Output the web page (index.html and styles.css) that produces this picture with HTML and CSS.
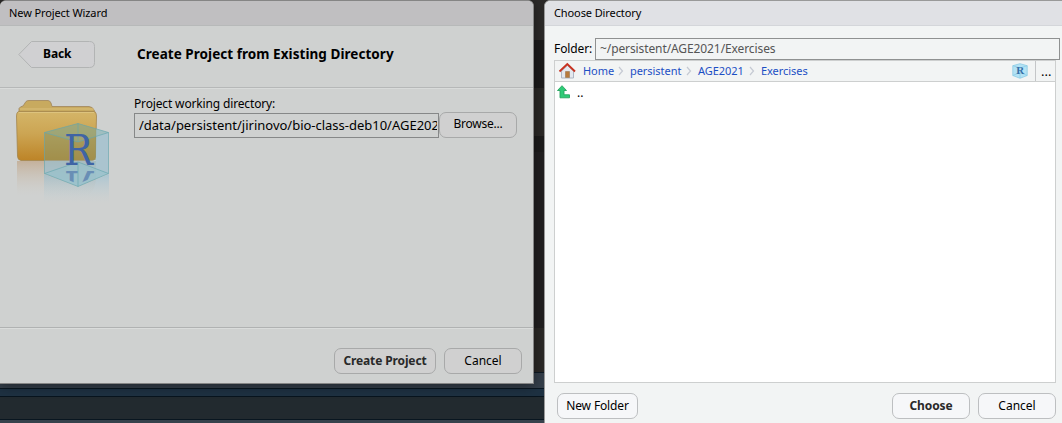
FILE: index.html
```html
<!DOCTYPE html>
<html lang="en">
<head>
<meta charset="utf-8">
<title>New Project Wizard</title>
<link rel="stylesheet" href="styles.css">
</head>
<body>
<section class="dialog wizard">
  <header class="titlebar"><span class="t-new">New Project Wizard</span></header>
  <div class="wizard-head">
    <div class="back">
      <svg width="78" height="28" viewBox="0 0 78 28"><path d="M.8 13.5 13.5.5H71.500Q76.500.5 76.500 5.500V21.500Q76.500 26.500 71.500 26.500H13.500Z" fill="#d0d0d2" stroke="#b2b4b4"/></svg>
      <b class="t-back">Back</b>
    </div>
    <h1><span class="t-heading">Create Project from Existing Directory</span></h1>
  </div>
  <div class="wizard-body">
    <svg class="folder" width="98" height="112" viewBox="14 92 98 112">
      <defs>
        <linearGradient id="gold" x1="0" y1="0" x2="0" y2="1"><stop stop-color="#d4b568"/><stop offset=".45" stop-color="#cca553"/><stop offset="1" stop-color="#bd8427"/></linearGradient>
        <linearGradient id="fade" x1="0" y1="0" x2="0" y2="1"><stop stop-color="#bd9c78" stop-opacity=".6"/><stop offset="1" stop-color="#cdc5bc" stop-opacity="0"/></linearGradient>
        <linearGradient id="bluefade" x1="0" y1="0" x2="0" y2="1"><stop stop-color="#92bdd2" stop-opacity=".6"/><stop offset="1" stop-color="#bbced4" stop-opacity="0"/></linearGradient>
        <clipPath id="mirror"><path d="M44 170H110L78 184Z"/></clipPath>
      </defs>
      <path d="M17 161H96V178Q96 189 88 196H17Z" fill="url(#fade)"/>
      <path d="M44 174 78 187 109 174V203H44Z" fill="url(#bluefade)"/>
      <path d="M19 111V108.500Q20 106.500 23 106L26 101.500Q27 100.500 29 100.500H48Q50 100.500 51 103L52 106.500H89Q93 107 94 110L95 112V120H19Z" fill="#c8aa5f" stroke="#a0845a" stroke-width=".8"/>
      <path d="M18.500 111.500H94Q96.500 112 96.500 116L95.500 157Q95 160.500 92 160.500H21Q17.500 160 17.500 156L16.500 116Q16.500 112 18.500 111.500Z" fill="url(#gold)" stroke="#a3854d" stroke-width=".8"/>
      <path d="M20 109H94M19 112.500H94" stroke="#dfc784" fill="none" stroke-width=".8"/>
      <path d="M44.500 132.500 78 123.500 96 128.800V160H44.500Z" fill="#8b9868" fill-opacity=".55"/>
      <path d="M96 128.800 108.500 132.500V173.500L78 186.500 44.500 173.500V160.500H96Z" fill="#9abfcf" fill-opacity=".7"/>
      <path d="M44.500 173.500 78 162 108.500 173.500 78 186.500Z" fill="#92c2cc" fill-opacity=".5"/>
      <path d="M44.500 132.500 78 123.500 108.500 132.500 78 142Z" fill="#8fb5a2" fill-opacity=".35"/>
      <path d="M44.500 132.500 78 142 108.500 132.500V173.500L78 186.500 44.500 173.500ZM44.500 132.500 78 123.500 108.500 132.500M44.500 173.500 78 162 108.500 173.500M78 142V123.500M78 162V186.500" fill="none" stroke="#65a6ad" stroke-opacity=".7" stroke-width=".9"/>
      <text class="logo-r" x="64" y="165" textLength="29" lengthAdjust="spacingAndGlyphs">R</text>
      <g clip-path="url(#mirror)" opacity=".55"><text class="logo-r" transform="translate(0 336) scale(1 -1)" x="64" y="165" textLength="29" lengthAdjust="spacingAndGlyphs">R</text></g>
    </svg>
    <div class="field">
      <label><span class="t-label">Project working directory:</span></label>
      <div class="field-row">
        <div class="path"><span class="t-path">/data/persistent/jirinovo/bio-class-deb10/AGE202</span></div>
        <div class="button browse"><span class="t-browse">Browse...</span></div>
      </div>
    </div>
  </div>
  <footer class="wizard-foot">
    <div class="button create"><b class="t-create">Create Project</b></div>
    <div class="button"><span class="t-cancel">Cancel</span></div>
  </footer>
</section>

<section class="dialog chooser">
  <header class="titlebar"><span class="t-choosedir">Choose Directory</span></header>
  <div class="folder-row"><span class="t-folder">Folder:</span><div class="folder-input"><span class="t-dir">~/persistent/AGE2021/Exercises</span></div></div>
  <div class="browser">
    <nav class="crumbs">
      <svg class="home" width="18" height="18" viewBox="0 0 18 18"><path d="M3.500 9V16H15.500V9L9.500 3.500Z" fill="#e4e8ee" stroke="#aeb6c4"/><path d="M7.500 9.500H11.500V15.500H7.500Z" fill="#b87b3c" stroke="#9b7651" stroke-width=".6"/><path d="M1.500 9.500 9.300 2 17 9.500" fill="none" stroke="#c83220" stroke-width="1.900"/></svg>
      <span class="link l-home">Home</span>
      <svg class="sep" width="6" height="10"><path d="M1 1 4.500 5 1 9" /></svg>
      <span class="link l-pers">persistent</span>
      <svg class="sep" width="6" height="10"><path d="M1 1 4.500 5 1 9" /></svg>
      <span class="link l-age">AGE2021</span>
      <svg class="sep" width="6" height="10"><path d="M1 1 4.500 5 1 9" /></svg>
      <span class="link l-ex">Exercises</span>
      <svg class="cube" width="16" height="16" viewBox="0 0 16 16"><path d="M.8 2.700 8 .7 15.200 2.700V12.500L8 15.300.8 12.500Z" fill="#b4e2f4" stroke="#8bcbe4" stroke-width=".8"/><path d="M.8 2.700 8 5 15.200 2.700M.8 12.500 8 9.500 15.200 12.500M8 9.500V15" fill="none" stroke="#86cce6" stroke-width=".7"/><text class="mini-r" x="4.200" y="10.500">R</text></svg>
      <div class="more"><span>...</span></div>
    </nav>
    <div class="up">
      <svg width="14" height="14" viewBox="0 0 14 14"><path d="M5 .7.5 5.500H3V12.800H12.500V9.800H7V5.500H9.500Z" fill="#2ecb77" stroke="#25a45f" stroke-width=".9"/></svg>
      <span>..</span>
    </div>
  </div>
  <footer class="chooser-foot">
    <div class="button new"><span class="t-newfolder">New Folder</span></div>
    <div class="button"><b class="t-choose">Choose</b></div>
    <div class="button"><span class="t-cancel">Cancel</span></div>
  </footer>
</section>
</body>
</html>
```
FILE: styles.css
```css
* { box-sizing: border-box; }
body {
  margin: 0; width: 1062px; height: 423px; overflow: hidden; position: relative;
  font: 12px/16px "Noto Sans", "Open Sans", sans-serif; color: #000;
  background: linear-gradient(#2c2a29 0 40px, #1c1b1b 40px 88px, #2a2826 88px 136px, #1c1b1b 136px 152px, #211f20 152px 328px, #2a2826 328px 372px, #0e1a24 372px 373px, #343e49 373px 388px, #091620 388px 389px, #1e3142 389px 396px, #08141e 396px 397px, #222a2f 397px 419px, #091620 419px 420px, #36424c 420px);
}
svg { display: block; flex: none; }
span, b { white-space: nowrap; }
.dialog { position: absolute; top: 0; display: flex; flex-direction: column; }
.wizard { left: 0; width: 534px; height: 384px; background: #cfd1d0; border: solid #858585; border-width: 1px 1px 1px 0; border-radius: 6px 6px 0 0; box-shadow: 0 2px 12px rgba(0,0,0,.4); }
.chooser { left: 544px; width: 530px; height: 440px; background: #f2f4f4; border: 1px solid #999; border-radius: 6px 0 0 0; }
.titlebar { height: 25px; padding: 4px 9px; font-size: 11px; letter-spacing: -.1px; border-radius: 6px 5px 0 0; border-bottom: 1px solid #b7b9b9; background: #c0bfc1; }
.chooser .titlebar { background: #e0e1e5; border-color: #d4d6da; }
.wizard-head { height: 62px; display: flex; padding: 15px 0 0 18px; border-bottom: 1px solid #b6b8b8; }
.back { display: grid; width: 78px; height: 28px; }
.back > * { grid-area: 1 / 1; }
.back b { padding: 5px 0 0 25px; letter-spacing: -.1px; }
h1 { margin: 4px 0 0 41px; font-size: 13.500px; line-height: 18px; letter-spacing: .05px; }
.wizard-body { height: 240px; border-top: 1px solid #d9dbda; border-bottom: 1px solid #b0b2b2; display: flex; padding: 3px 0 0 14px; }
.logo-r { font: 43px "DejaVu Serif", serif; fill: #3f64a5; }
.mini-r { font: bold 11px "Liberation Serif", serif; fill: #3570a8; }
.field { margin: 4px 0 0 22px; }
.t-label { letter-spacing: -.15px; }
.field-row { display: flex; }
.path { width: 305px; height: 25px; margin-top: 1px; border: 1px solid #868888; padding: 2px 0 0 4px; font-size: 13px; line-height: 18px; }
.path span { display: block; width: 298px; overflow: hidden; letter-spacing: -.01px; }
.button { height: 26px; width: 78px; border: 1px solid #a8a9a9; border-radius: 7px; background: #d0d0d0; display: flex; align-items: center; justify-content: center; }
.browse { padding-bottom: 2px; }
.t-browse { letter-spacing: -.25px; }
.t-create, .t-newfolder, .t-choose { letter-spacing: -.13px; }
.wizard-foot { border-top: 1px solid #dadcdb; display: flex; justify-content: flex-end; gap: 8px; padding: 19px 11px 0 0; flex: 1; }
.create { width: 102px; }
.create b, .chooser-foot b { color: #292929; }
.folder-row { display: flex; padding: 12px 0 0 9px; height: 34px; }
.folder-row > span { width: 41px; padding-top: 3px; letter-spacing: -.1px; }
.folder-input { width: 465px; height: 22px; flex: none; border: 1px solid #8f9191; padding: 2px 0 0 4px; color: #555; letter-spacing: -.1px; }
.browser { margin: 0 0 0 9px; width: 502px; height: 323px; border: 1px solid #cdcfcf; background: #fff; }
.crumbs { height: 21px; background: #f2f4f4; border-bottom: 1px solid #cdcfcf; display: flex; align-items: center; padding-left: 3px; }
.link { color: #1c4fc4; font-size: 11px; letter-spacing: -.05px; }
.l-home { width: 35px; margin-left: 7px; }
.sep { fill: none; stroke: #c5cad3; stroke-width: 1.200; margin-right: 6px; }
.l-pers { width: 56px; }
.l-age { width: 51px; }
.l-ex { width: 50px; }
.cube { margin-left: auto; }
.more { width: 20px; height: 20px; margin-left: 7px; border-left: 1px solid #c4c6c8; padding: 2px 0 0 5px; font-size: 13px; }
.up { display: flex; gap: 6px; padding: 3px 0 0 2px; }
.chooser-foot { display: flex; gap: 8px; padding: 10px 17px 0 12px; }
.chooser-foot .button { background: #f6f7f9; border-color: #bdbfc1; }
.chooser-foot .new { width: 81px; margin-right: auto; }
```
